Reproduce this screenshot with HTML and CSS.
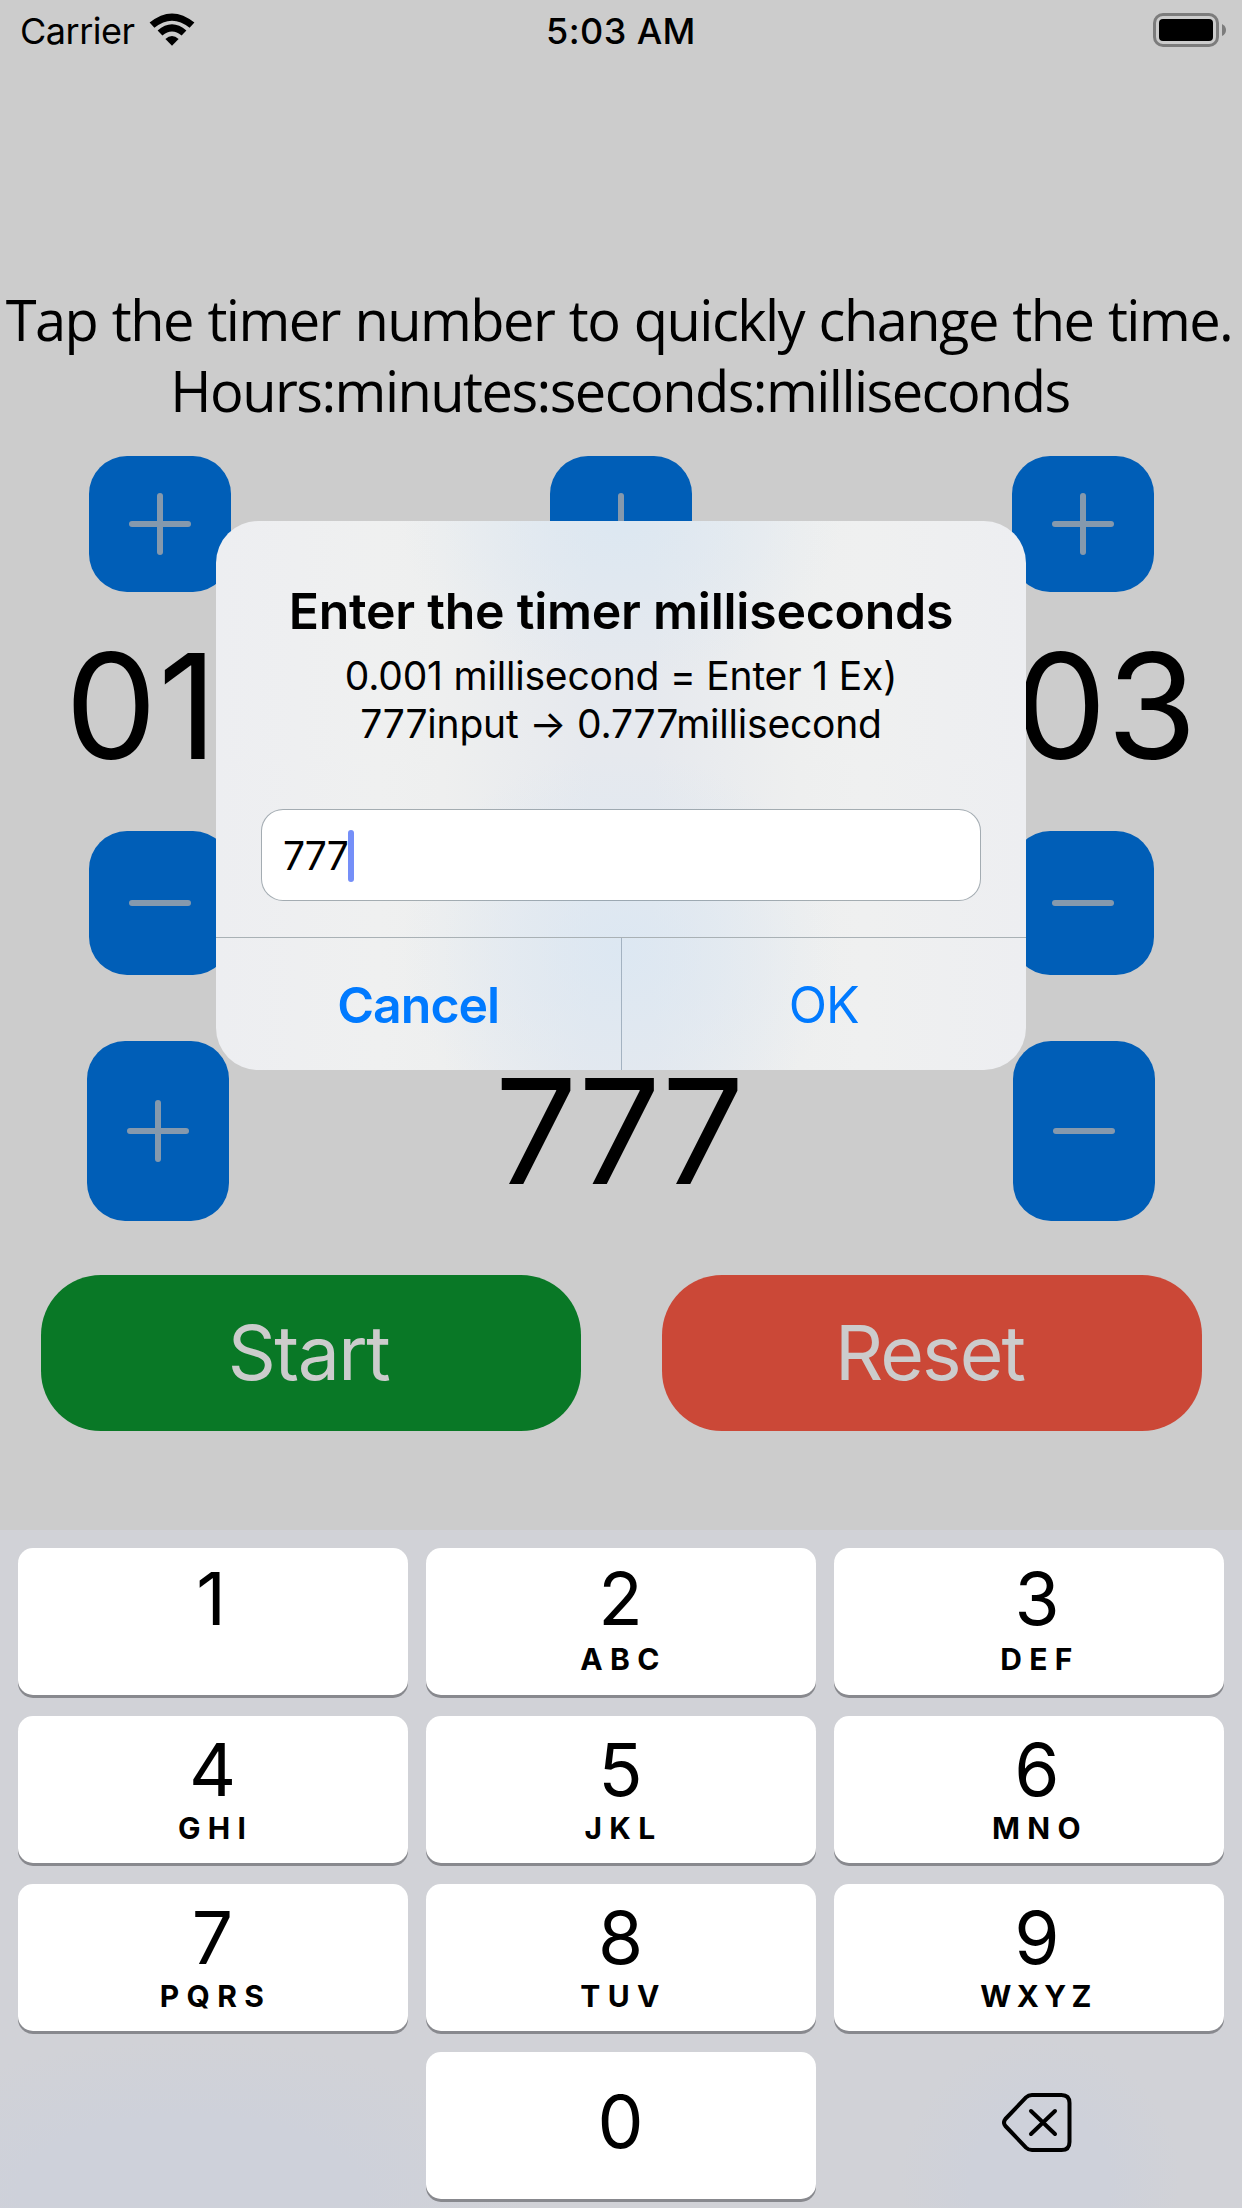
FILE: index.html
```
<!DOCTYPE html>
<html lang="en">
<head>
<meta charset="utf-8">
<title>Timer</title>
<link rel="stylesheet" href="styles.css">
</head>
<body>
<div class="screen">
  <header class="status">
    <div class="status-left">
      <span class="carrier">Carrier</span>
      <svg class="wifi" width="46" height="33" viewBox="0 0 46 33">
        <path d="M0.6 9.6 Q23 -8.8 45.4 9.6 L40.6 14.8 Q23 0.6 5.4 14.8 Z"/>
        <path d="M8.6 17.6 Q23 5 37.4 17.6 L32.6 22.6 Q23 14.4 13.4 22.6 Z"/>
        <path d="M16.4 26 Q23 20.2 29.6 26 L23 32.8 Z"/>
      </svg>
    </div>
    <span class="clock">5:03 AM</span>
    <div class="status-right">
      <svg class="battery" width="74" height="34" viewBox="0 0 74 34">
        <rect x="1.5" y="1.5" width="63" height="31" rx="8.5" fill="none" stroke="#7c7c7c" stroke-width="3"/>
        <rect x="6" y="6" width="54" height="22" rx="4"/>
        <path d="M69 11 Q73 13 73 17 Q73 21 69 23 Z" fill="#7c7c7c"/>
      </svg>
    </div>
  </header>

  <main class="timer">
    <h1 class="hint"><span class="hint-line first-line">Tap the timer number to quickly change the time.</span><span class="hint-line">Hours:minutes:seconds:milliseconds</span></h1>
    <div class="steps">
      <button class="step plus"></button>
      <button class="step plus"></button>
      <button class="step plus"></button>
    </div>
    <div class="numbers"><span class="number hours">01</span><span class="number">03</span></div>
    <div class="steps lower">
      <button class="step minus"></button>
      <button class="step minus"></button>
      <button class="step minus"></button>
    </div>
    <div class="millis">
      <button class="step plus"></button>
      <span class="number ms">777</span>
      <button class="step minus"></button>
    </div>
    <div class="actions">
      <button class="action start">Start</button>
      <button class="action reset">Reset</button>
    </div>
  </main>

  <section class="keyboard">
    <div class="key first"><span class="digit one">1</span></div>
    <div class="key first"><span class="digit">2</span><span class="letters">ABC</span></div>
    <div class="key first right"><span class="digit">3</span><span class="letters">DEF</span></div>
    <div class="key"><span class="digit">4</span><span class="letters">GHI</span></div>
    <div class="key"><span class="digit">5</span><span class="letters">JKL</span></div>
    <div class="key right"><span class="digit">6</span><span class="letters">MNO</span></div>
    <div class="key"><span class="digit">7</span><span class="letters">PQRS</span></div>
    <div class="key"><span class="digit">8</span><span class="letters">TUV</span></div>
    <div class="key right"><span class="digit">9</span><span class="letters wide">WXYZ</span></div>
    <div class="blank"></div>
    <div class="key zero"><span class="digit">0</span></div>
    <div class="delete">
      <svg width="70" height="59" viewBox="0 0 70 59" fill="none" stroke="#000" stroke-width="4" stroke-linecap="round" stroke-linejoin="round">
        <path d="M30 2 H59.5 Q67.5 2 67.5 10 V49 Q67.5 57 59.5 57 H30 Q26.5 57 24 54.6 L3.4 33 Q0.6 29.5 3.4 26 L24 4.4 Q26.5 2 30 2 Z"/>
        <path d="M29 18 L53 41 M53 18 L29 41"/>
      </svg>
    </div>
  </section>

  <div class="alert">
    <h2 class="alert-title">Enter the timer milliseconds</h2>
    <p class="alert-message">0.001 millisecond = Enter 1 Ex)<br>777input → 0.777millisecond</p>
    <div class="field"><span class="value">777</span><span class="caret"></span></div>
    <div class="alert-actions">
      <button class="alert-button cancel">Cancel</button>
      <button class="alert-button">OK</button>
    </div>
  </div>
</div>
</body>
</html>
```
FILE: styles.css
```
* { box-sizing: border-box; margin: 0; padding: 0; }

body {
  font-family: Inter, "Liberation Sans", sans-serif;
  color: #000;
  background: #ccc;
}

button { border: 0; font: inherit; background: none; }

.screen {
  position: relative;
  width: 1242px;
  height: 2208px;
  overflow: hidden;
  display: flex;
  flex-direction: column;
}

/* Status bar */
.status {
  display: grid;
  grid-template-columns: 1fr auto 1fr;
  height: 60px;
  padding: 0 16px 0 20px;
  font-size: 36px;
  line-height: 62px;
}
.status-left { display: flex; }
.carrier { letter-spacing: -0.5px; }
.wifi { margin: 13px 0 0 14px; }
.clock { font-weight: 500; letter-spacing: 0.4px; margin-right: 4px; }
.status-right { display: flex; justify-content: flex-end; }
.battery { margin: 13px -1px 0 0; }

/* Timer */
.timer { height: 1470px; padding-top: 224px; }

.hint {
  font: 400 56px/71px "Open Sans", "Noto Sans", sans-serif;
  letter-spacing: -1.55px;
  text-align: center;
  white-space: nowrap;
  height: 172px;
}
.hint-line { display: block; margin-right: 2px; }
.first-line { margin-right: 4px; word-spacing: 1.5px; }

.steps {
  display: flex;
  justify-content: space-between;
  padding: 0 88px 0 89px;
}
.step {
  flex: none;
  display: flex;
  align-items: center;
  justify-content: center;
  width: 142px;
  height: 136px;
  border-radius: 38px;
  background: #005eb7;
}
.step:nth-child(2) { margin-right: 1px; }
.lower .step { height: 144px; }
.step::before {
  content: "";
  width: 62px;
  height: 6px;
  border-radius: 3px;
  background: #8599ad;
}
.plus::after {
  content: "";
  width: 6px;
  height: 62px;
  margin: 0 28px 0 -34px;
  border-radius: 3px;
  background: #8599ad;
}

.numbers {
  display: flex;
  justify-content: space-between;
  margin-bottom: 10px;
  padding: 0 45px 0 65px;
  line-height: 229px;
}
.number { font-size: 146px; }
.hours { letter-spacing: 1px; }

.millis {
  display: flex;
  align-items: center;
  justify-content: space-between;
  height: 180px;
  margin-top: 66px;
  padding: 0 87px;
}
.millis .step { height: 180px; margin: 0; }
.ms { letter-spacing: -2px; line-height: 180px; margin-right: 5px; }

.actions {
  display: flex;
  justify-content: space-between;
  margin-top: 54px;
  padding: 0 40px 0 41px;
}
.action {
  width: 540px;
  height: 156px;
  padding-right: 5px;
  border-radius: 60px;
  font-size: 75px;
  line-height: 156px;
  letter-spacing: -1.5px;
  color: #ccc;
}
.start { background: #097826; }
.reset { background: #cb4837; letter-spacing: -1.9px; }

/* Numeric keyboard */
.keyboard {
  display: grid;
  grid-template-columns: repeat(3, 390px);
  grid-auto-rows: 147px;
  gap: 21px 18px;
  height: 678px;
  padding: 18px 18px 0;
  background:
    radial-gradient(ellipse 340px 150px at 190px 660px, #ced1da 50%, transparent),
    radial-gradient(ellipse 140px 140px at 1040px 650px, #ced1da 50%, transparent),
    #d1d2d7;
}
.key {
  display: flex;
  flex-direction: column;
  align-items: center;
  padding-top: 14px;
  border-radius: 15px;
  background: #fff;
  box-shadow: 0 3px 0 #88898e;
}
.digit { font-size: 73px; line-height: 80px; margin-right: 1px; }
.digit.one { margin-right: 4px; }
.letters {
  margin-top: 3px;
  font-size: 30px;
  font-weight: 700;
  line-height: 30px;
  letter-spacing: 7.3px;
  text-indent: 5px;
}
.letters.wide { letter-spacing: 5.3px; text-indent: 2px; }
.first { padding-top: 11px; }
.first .letters { margin-top: 5px; }
.right { padding-left: 17px; }
.zero { justify-content: center; padding: 0 0 8px; }
.delete { display: flex; align-items: center; justify-content: center; padding: 0 0 6px 16px; }

/* Alert dialog over the timer */
.alert {
  position: absolute;
  left: 216px;
  top: 521px;
  width: 810px;
  height: 549px;
  border-radius: 42px;
  overflow: hidden;
  padding-top: 60px;
  text-align: center;
  background:
    radial-gradient(ellipse 220px 160px at 405px 0, rgba(218, 231, 242, 0.8), rgba(218, 231, 242, 0)),
    radial-gradient(ellipse 220px 200px at 405px 430px, rgba(218, 231, 243, 0.8), rgba(218, 231, 243, 0)),
    linear-gradient(90deg, #edeef1, #eff0f0 20%, #eeefef 28%, #e6e9ee 46%, #e6e9ee 54%, #eeefef 72%, #eff0f0 80%, #edeef1);
}
.alert-title {
  font-size: 50px;
  font-weight: 600;
  line-height: 60px;
  letter-spacing: -0.25px;
}
.alert-message {
  margin-top: 11px;
  font-size: 39px;
  line-height: 48px;
  letter-spacing: -0.2px;
}
.field {
  display: flex;
  align-items: center;
  width: 720px;
  height: 92px;
  margin: 61px 45px 36px;
  padding: 1px 0 0 21px;
  border: 1px solid rgba(90, 105, 115, 0.5);
  border-radius: 22px;
  background: #fff;
  background-clip: padding-box;
  font-size: 39px;
}
.value { letter-spacing: -1px; }
.caret {
  width: 6px;
  height: 52px;
  border-radius: 3px;
  background: #758ff8;
}
.alert-actions {
  display: flex;
  height: 133px;
  border-top: 1px solid #a9b1b5;
}
.alert-button {
  flex: 1;
  font-size: 50px;
  line-height: 134px;
  letter-spacing: -1px;
  color: #007aff;
}
.cancel { font-weight: 600; border-right: 1px solid #a3b2c1; }
```
